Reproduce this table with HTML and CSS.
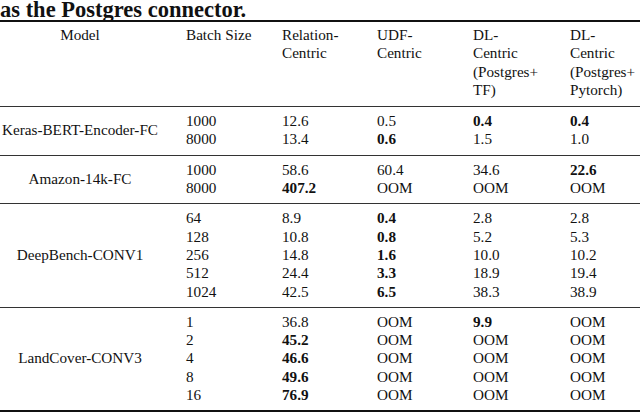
FILE: index.html
```html
<!DOCTYPE html>
<html>
<head>
<meta charset="utf-8">
<link rel="stylesheet" href="styles.css">
</head>
<body>
<div class="title">as the Postgres connector.</div>
<table class="results">
  <colgroup>
    <col class="c-model"><col class="c-batch"><col class="c-rel"><col class="c-udf"><col class="c-tf"><col class="c-pt">
  </colgroup>
  <thead>
    <tr>
      <th class="model">Model</th>
      <th>Batch Size</th>
      <th>Relation-<br>Centric</th>
      <th>UDF-<br>Centric</th>
      <th>DL-<br>Centric<br>(Postgres+<br>TF)</th>
      <th>DL-<br>Centric<br>(Postgres+<br>Pytorch)</th>
    </tr>
  </thead>
  <tbody>
    <tr>
      <td class="model">Keras-BERT-Encoder-FC</td>
      <td>1000<br>8000</td>
      <td>12.6<br>13.4</td>
      <td>0.5<br><b>0.6</b></td>
      <td><b>0.4</b><br>1.5</td>
      <td><b>0.4</b><br>1.0</td>
    </tr>
    <tr>
      <td class="model">Amazon-14k-FC</td>
      <td>1000<br>8000</td>
      <td>58.6<br><b>407.2</b></td>
      <td>60.4<br>OOM</td>
      <td>34.6<br>OOM</td>
      <td><b>22.6</b><br>OOM</td>
    </tr>
    <tr>
      <td class="model">DeepBench-CONV1</td>
      <td>64<br>128<br>256<br>512<br>1024</td>
      <td>8.9<br>10.8<br>14.8<br>24.4<br>42.5</td>
      <td><b>0.4</b><br><b>0.8</b><br><b>1.6</b><br><b>3.3</b><br><b>6.5</b></td>
      <td>2.8<br>5.2<br>10.0<br>18.9<br>38.3</td>
      <td>2.8<br>5.3<br>10.2<br>19.4<br>38.9</td>
    </tr>
    <tr>
      <td class="model">LandCover-CONV3</td>
      <td>1<br>2<br>4<br>8<br>16</td>
      <td>36.8<br><b>45.2</b><br><b>46.6</b><br><b>49.6</b><br><b>76.9</b></td>
      <td>OOM<br>OOM<br>OOM<br>OOM<br>OOM</td>
      <td><b>9.9</b><br>OOM<br>OOM<br>OOM<br>OOM</td>
      <td>OOM<br>OOM<br>OOM<br>OOM<br>OOM</td>
    </tr>
  </tbody>
</table>
</body>
</html>
```
FILE: styles.css
```css
html, body {
  margin: 0;
  padding: 0;
  background: #fff;
  overflow: hidden;
}
body {
  width: 640px;
  height: 414px;
  font-family: "Liberation Serif", "DejaVu Serif", serif;
  color: #111;
}
.title {
  font-weight: bold;
  font-size: 22.5px;
  line-height: 20px;
  height: 20px;
  white-space: nowrap;
}
.results {
  width: 640px;
  table-layout: fixed;
  border-collapse: collapse;
  border-spacing: 0;
  font-size: 15.2px;
  line-height: 18.3px;
  border-top: 2px solid #111;
  border-bottom: 2px solid #111;
}
.c-model { width: 186px; }
.c-batch { width: 96px; }
.c-rel { width: 95px; }
.c-udf { width: 96px; }
.c-tf { width: 97px; }
.c-pt { width: 70px; }
.results th {
  font-weight: normal;
  text-align: left;
  vertical-align: top;
  padding: 4px 0 7px 0;
  white-space: nowrap;
}
.results td {
  text-align: left;
  vertical-align: top;
  padding: 5px 0 6px 0;
  white-space: nowrap;
  border-top: 1.5px solid #333;
}
.results .model {
  text-align: center;
  vertical-align: middle;
  padding-right: 26px;
}
.results th.model {
  vertical-align: top;
}
.results b {
  font-weight: bold;
}
```
